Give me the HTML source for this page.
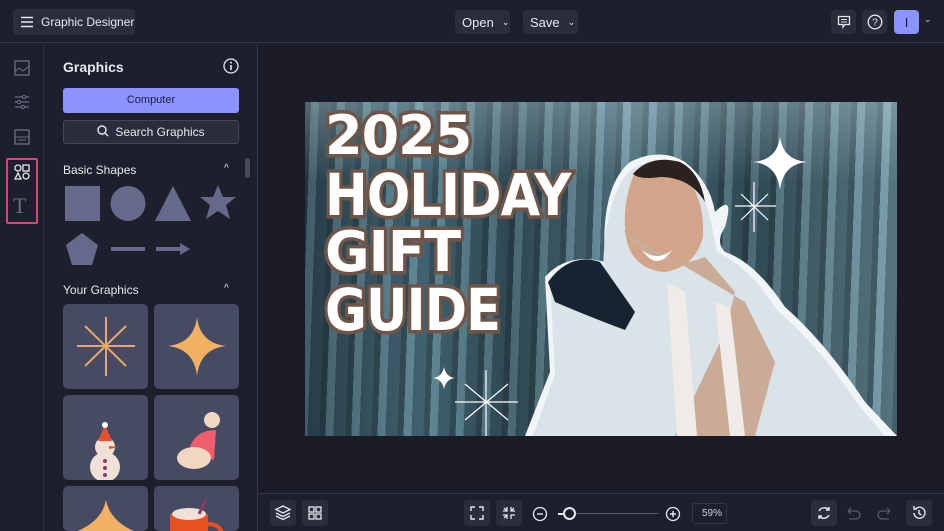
<!DOCTYPE html>
<html><head><style>
*{margin:0;padding:0;box-sizing:border-box}
html,body{width:944px;height:531px;overflow:hidden}
body{background:#1b1c27;font-family:"Liberation Sans",sans-serif;color:#e6e7ee;position:relative}
.top{position:absolute;left:0;top:0;width:944px;height:43px;background:#1e1f2c;border-bottom:1px solid #343646}
.btn{position:absolute;background:#2b2d3b;border-radius:4px;font-size:13px;color:#e6e7ee;display:flex;align-items:center}
.rail{position:absolute;left:0;top:44px;width:44px;height:487px;background:#1e1f2c;border-right:1px solid #2e3040}
.panel{position:absolute;left:44px;top:44px;width:214px;height:487px;background:#1e1f2c;border-right:1px solid #343646;overflow:hidden}
.tile{position:absolute;width:85px;height:85px;background:#464a63;border-radius:5px;overflow:hidden}
.bot{position:absolute;left:258px;top:493px;width:686px;height:38px;background:#1e1f2c;border-top:1px solid #343646}
.ib{position:absolute;top:6px;width:26px;height:26px;background:#2b2d3b;border-radius:4px}
.t{position:absolute;left:20px;font-weight:bold;color:#fff;-webkit-text-stroke:7px #6e5548;paint-order:stroke fill;font-family:"DejaVu Sans",sans-serif;letter-spacing:-1px;transform-origin:left top;line-height:1.1}
</style></head><body>
<div class="top">
 <div class="btn" style="left:13px;top:9px;width:122px;height:26px;padding-left:7px">
  <svg width="14" height="12"><path d="M1 1.5H13M1 6H13M1 10.5H13" stroke="#e6e7ee" stroke-width="1.5"/></svg>
  <span style="margin-left:7px;font-size:12px">Graphic Designer</span></div>
 <div class="btn" style="left:455px;top:10px;width:55px;height:24px;padding-left:7px">Open <span style="margin-left:8px;font-size:9px">⌄</span></div>
 <div class="btn" style="left:523px;top:10px;width:55px;height:24px;padding-left:7px">Save <span style="margin-left:8px;font-size:9px">⌄</span></div>
 <div class="btn" style="left:831px;top:10px;width:25px;height:24px;justify-content:center"><svg width="14" height="14"><path d="M1.5 1.5H12.5V9.5H8L6 12V9.5H1.5Z" fill="none" stroke="#e6e7ee" stroke-width="1.3"/><path d="M4 4.5H10M4 7H10" stroke="#e6e7ee"/></svg></div>
 <div class="btn" style="left:862px;top:10px;width:25px;height:24px;justify-content:center"><svg width="16" height="16"><circle cx="8" cy="8" r="6.8" fill="none" stroke="#e6e7ee" stroke-width="1.3"/><text x="8" y="11.5" font-size="10" text-anchor="middle" fill="#e6e7ee" font-family="Liberation Sans">?</text></svg></div>
 <div class="btn" style="left:894px;top:10px;width:25px;height:24px;background:#8b93ff;justify-content:center;color:#1e1f2c;font-size:13px">I</div>
 <div style="position:absolute;left:924px;top:14px;font-size:9px;color:#ccc">⌄</div>
</div>
<div class="rail">
 <svg style="position:absolute;left:14px;top:16px" width="16" height="16"><rect x="1" y="1" width="14" height="14" fill="none" stroke="#6b6f85" stroke-width="1.3"/><path d="M1 12L5 8L9 11L15 6" stroke="#6b6f85" fill="none"/></svg>
 <svg style="position:absolute;left:14px;top:50px" width="16" height="16"><path d="M1 3H15M1 8H15M1 13H15" stroke="#6b6f85" stroke-width="1.3"/><circle cx="10" cy="3" r="1.6" fill="#1e1f2c" stroke="#6b6f85"/><circle cx="5" cy="8" r="1.6" fill="#1e1f2c" stroke="#6b6f85"/><circle cx="9" cy="13" r="1.6" fill="#1e1f2c" stroke="#6b6f85"/></svg>
 <svg style="position:absolute;left:14px;top:85px" width="16" height="16"><rect x="1" y="1" width="14" height="14" fill="none" stroke="#6b6f85" stroke-width="1.3"/><path d="M1 8H15M4 11H12" stroke="#6b6f85"/></svg>
 <div style="position:absolute;left:6px;top:114px;width:32px;height:66px;border:2px solid #e0426e;border-radius:2px"></div>
 <svg style="position:absolute;left:14px;top:120px" width="16" height="16"><circle cx="4" cy="4" r="3" fill="none" stroke="#e6e7ee" stroke-width="1.3"/><rect x="9" y="1" width="6" height="6" fill="none" stroke="#e6e7ee" stroke-width="1.3"/><path d="M4 9L7 15H1Z" fill="none" stroke="#e6e7ee" stroke-width="1.3"/><circle cx="12" cy="12" r="3" fill="none" stroke="#e6e7ee" stroke-width="1.3"/></svg>
 <div style="position:absolute;left:13px;top:150px;font-family:'Liberation Serif',serif;font-size:22px;line-height:24px;color:#6b6f85">T</div>
</div>
<div class="panel">
 <div style="position:absolute;left:19px;top:15px;font-weight:bold;font-size:14px">Graphics</div>
 <svg style="position:absolute;left:179px;top:14px" width="16" height="16"><circle cx="8" cy="8" r="7" fill="none" stroke="#e6e7ee" stroke-width="1.3"/><path d="M8 7V12" stroke="#e6e7ee" stroke-width="1.6"/><circle cx="8" cy="4.6" r="1" fill="#e6e7ee"/></svg>
 <div style="position:absolute;left:19px;top:44px;width:176px;height:25px;background:#8b93ff;border-radius:3px;color:#1e1f3c;font-size:11px;text-align:center;line-height:25px">Computer</div>
 <div style="position:absolute;left:19px;top:76px;width:176px;height:24px;background:#2b2d3b;border:1px solid #44475a;border-radius:3px;font-size:12px;text-align:center;line-height:22px"><svg width="12" height="12" style="vertical-align:-1px;margin-right:6px"><circle cx="5" cy="5" r="4" fill="none" stroke="#e6e7ee" stroke-width="1.4"/><path d="M8 8L11 11" stroke="#e6e7ee" stroke-width="1.4"/></svg>Search Graphics</div>
 <div style="position:absolute;left:19px;top:119px;font-size:12px">Basic Shapes</div>
 <div style="position:absolute;left:180px;top:119px;font-size:10px">^</div>
 <div style="position:absolute;left:201px;top:114px;width:5px;height:20px;background:#474a5c;border-radius:3px"></div>
 <svg style="position:absolute;left:0;top:138px" width="214" height="90">
  <rect x="21" y="4" width="35" height="35" fill="#666a8a"/>
  <circle cx="84" cy="21.5" r="17.5" fill="#666a8a"/>
  <path d="M129 4L147 39H111Z" fill="#666a8a"/>
  <path d="M174 3L179 15L192 15L182 23L186 37L174 29L162 37L166 23L156 15L169 15Z" fill="#666a8a"/>
  <path d="M38 51L54 63L48 83H28L22 63Z" fill="#666a8a"/>
  <path d="M67 67H101" stroke="#666a8a" stroke-width="4"/>
  <path d="M112 67H138" stroke="#666a8a" stroke-width="4"/><path d="M136 61L146 67L136 73Z" fill="#666a8a"/>
 </svg>
 <div style="position:absolute;left:19px;top:239px;font-size:12px">Your Graphics</div>
 <div style="position:absolute;left:180px;top:239px;font-size:10px">^</div>
 <div class="tile" style="left:19px;top:260px"><svg width="85" height="85"><g stroke="#e8a865" stroke-width="2"><path d="M43 13V72M14 42H72M22 22L63 62M22 62L63 22"/></g></svg></div>
 <div class="tile" style="left:110px;top:260px"><svg width="85" height="85"><path d="M43 13Q46 39 72 42Q46 45 43 72Q40 45 14 42Q40 39 43 13Z" fill="#f0b163"/></svg></div>
 <div class="tile" style="left:19px;top:351px"><svg width="85" height="85"><circle cx="42" cy="72" r="15" fill="#efe1d6"/><circle cx="42" cy="52" r="10" fill="#efe1d6"/><path d="M35 46L42 30L49 46Z" fill="#e4532c"/><circle cx="42" cy="30" r="3" fill="#fff"/><path d="M46 51L56 52L46 54Z" fill="#e4532c"/><circle cx="42" cy="66" r="2" fill="#8a3a66"/><circle cx="42" cy="73" r="2" fill="#8a3a66"/><circle cx="42" cy="80" r="2" fill="#8a3a66"/></svg></div>
 <div class="tile" style="left:110px;top:351px"><svg width="85" height="85"><path d="M35 55Q40 35 62 35L60 65Z" fill="#f05d6d"/><circle cx="58" cy="25" r="8" fill="#efd7c0"/><ellipse cx="40" cy="63" rx="17" ry="11" fill="#efd7c0"/></svg></div>
 <div class="tile" style="left:19px;top:442px;height:45px"><svg width="85" height="45"><path d="M43 14Q48 40 85 50V85H0V50Q38 40 43 14Z" fill="#f0b163"/></svg></div>
 <div class="tile" style="left:110px;top:442px;height:45px"><svg width="85" height="45"><rect x="16" y="28" width="38" height="50" fill="#e8501f"/><path d="M54 38Q70 38 68 55" stroke="#e8501f" stroke-width="4" fill="none"/><ellipse cx="35" cy="28" rx="17" ry="6" fill="#efe1d6"/><path d="M45 28L52 14" stroke="#8a3a66" stroke-width="3"/></svg></div>
</div>
<div style="position:absolute;left:305px;top:102px;width:592px;height:334px;overflow:hidden;background:linear-gradient(90deg,#2b4450 0%,#4f7886 20%,#34525e 35%,#5f8794 55%,#36545f 75%,#6e94a0 100%)">
 <div style="position:absolute;inset:0;background:repeating-linear-gradient(92deg,rgba(20,30,35,.45) 0 6px,rgba(200,230,240,.15) 6px 14px,rgba(30,45,55,.3) 14px 26px)"></div>
 <div style="position:absolute;left:0;top:0;width:592px;height:80px;background:linear-gradient(180deg,rgba(200,225,235,.3),transparent)"></div>
 <svg style="position:absolute;left:0;top:0" width="592" height="334">
  <path d="M220 334L245 270L240 175Q262 150 300 160Q295 85 325 60Q355 45 380 60Q405 80 410 110Q430 90 420 125Q410 140 420 150Q450 160 480 205Q520 240 560 300L592 334Z" fill="#f2f5f7"/>
  <path d="M228 334L250 272L245 180Q265 158 298 168Q300 92 327 67Q355 52 376 66Q398 85 405 115L412 150Q445 165 472 208Q515 245 555 305L580 334Z" fill="#d9e3e8"/>
  <path d="M330 70Q360 58 378 72Q400 95 398 135Q390 165 360 170Q330 168 322 140Q315 105 330 70Z" fill="#d2a489"/>
  <path d="M328 72Q345 52 375 60Q395 70 400 100Q385 75 355 75Q335 78 328 72Z" fill="#2b2220"/>
  <path d="M318 128Q352 175 400 155L430 190L420 230L370 334H450L470 260L440 200Z" fill="#c9ab98"/>
  <path d="M362 180L372 334H392L380 190ZM410 200L425 334H440L425 205Z" fill="#f0ebe6"/>
  <path d="M243 180Q265 150 295 160L330 210L320 228Q285 215 250 200Z" fill="#162330"/>
  <path d="M337 148Q352 160 367 148Q352 170 337 148Z" fill="#fff"/>
 </svg>
 <svg style="position:absolute;left:0;top:0" width="592" height="334">
  <path d="M475 35Q478 58 502 60Q478 62 475 88Q472 62 448 60Q472 58 475 35Z" fill="#fff"/>
  <g stroke="#fff" stroke-width="1.2"><path d="M449 80V130M430 104H471M436 92L463 118M436 118L463 92"/></g>
  <path d="M139 265Q141 275 150 276Q141 277 139 287Q137 277 128 276Q137 275 139 265Z" fill="#fff"/>
  <g stroke="#fff" stroke-width="1.2"><path d="M181 268V334M150 300H213M160 282L203 318M160 318L203 282"/></g>
 </svg>
 <div class="t" style="top:4px;font-size:54px;transform:scaleX(1.0)">2025</div>
 <div class="t" style="top:62px;font-size:58px;transform:scaleX(.88)">HOLIDAY</div>
 <div class="t" style="top:120px;font-size:56px;transform:scaleX(.97)">GIFT</div>
 <div class="t" style="top:177px;font-size:58px;transform:scaleX(.88)">GUIDE</div>
</div>
<div class="bot">
 <div class="ib" style="left:12px"><svg width="26" height="26"><path d="M13 6L20 9.5L13 13L6 9.5Z M6 13L13 16.5L20 13 M6 16L13 19.5L20 16" fill="none" stroke="#e6e7ee" stroke-width="1.3"/></svg></div>
 <div class="ib" style="left:44px"><svg width="26" height="26"><g fill="none" stroke="#e6e7ee" stroke-width="1.3"><rect x="7" y="7" width="5" height="5"/><rect x="14" y="7" width="5" height="5"/><rect x="7" y="14" width="5" height="5"/><rect x="14" y="14" width="5" height="5"/></g></svg></div>
 <div class="ib" style="left:206px"><svg width="26" height="26"><path d="M7 11V7H11M15 7H19V11M19 15V19H15M11 19H7V15" fill="none" stroke="#e6e7ee" stroke-width="1.4"/></svg></div>
 <div class="ib" style="left:238px"><svg width="26" height="26"><path d="M7 11H11V7M15 7V11H19M19 15H15V19M11 19V15H7M8 8L11 11M18 8L15 11M8 18L11 15" fill="none" stroke="#e6e7ee" stroke-width="1.3"/></svg></div>
 <svg style="position:absolute;left:274px;top:12px" width="16" height="16"><circle cx="8" cy="8" r="6.5" fill="none" stroke="#e6e7ee" stroke-width="1.3"/><path d="M5 8H11" stroke="#e6e7ee" stroke-width="1.4"/></svg>
 <div style="position:absolute;left:300px;top:19px;width:100px;height:1px;background:#555a6e"></div>
 <div style="position:absolute;left:300px;top:19px;width:8px;height:2px;background:#e6e7ee"></div>
 <div style="position:absolute;left:305px;top:13px;width:13px;height:13px;border:2px solid #e6e7ee;border-radius:50%;background:#1e1f2c"></div>
 <svg style="position:absolute;left:407px;top:12px" width="16" height="16"><circle cx="8" cy="8" r="6.5" fill="none" stroke="#e6e7ee" stroke-width="1.3"/><path d="M5 8H11M8 5V11" stroke="#e6e7ee" stroke-width="1.4"/></svg>
 <div style="position:absolute;left:434px;top:9px;width:35px;height:21px;border:1px solid #343646;border-radius:3px;font-size:10px;text-align:right;padding-right:4px;line-height:19px;color:#cfd0da">59%</div>
 <div class="ib" style="left:553px"><svg width="26" height="26"><path d="M8 11A6 6 0 0 1 18 10M18 15A6 6 0 0 1 8 16M18 7V10H15M8 19V16H11" fill="none" stroke="#e6e7ee" stroke-width="1.4"/></svg></div>
 <svg style="position:absolute;left:586px;top:12px" width="18" height="16"><path d="M4 5H12A4 4 0 0 1 12 13H5M4 5L7 2M4 5L7 8" fill="none" stroke="#555a6e" stroke-width="1.3"/></svg>
 <svg style="position:absolute;left:618px;top:12px" width="18" height="16"><path d="M14 5H6A4 4 0 0 0 6 13H13M14 5L11 2M14 5L11 8" fill="none" stroke="#555a6e" stroke-width="1.3"/></svg>
 <div class="ib" style="left:648px"><svg width="26" height="26"><path d="M8 13A5.5 5.5 0 1 0 10 8.5M8 6V9H11M13 10V13.5L15.5 15" fill="none" stroke="#e6e7ee" stroke-width="1.4"/></svg></div>
</div>
</body></html>
